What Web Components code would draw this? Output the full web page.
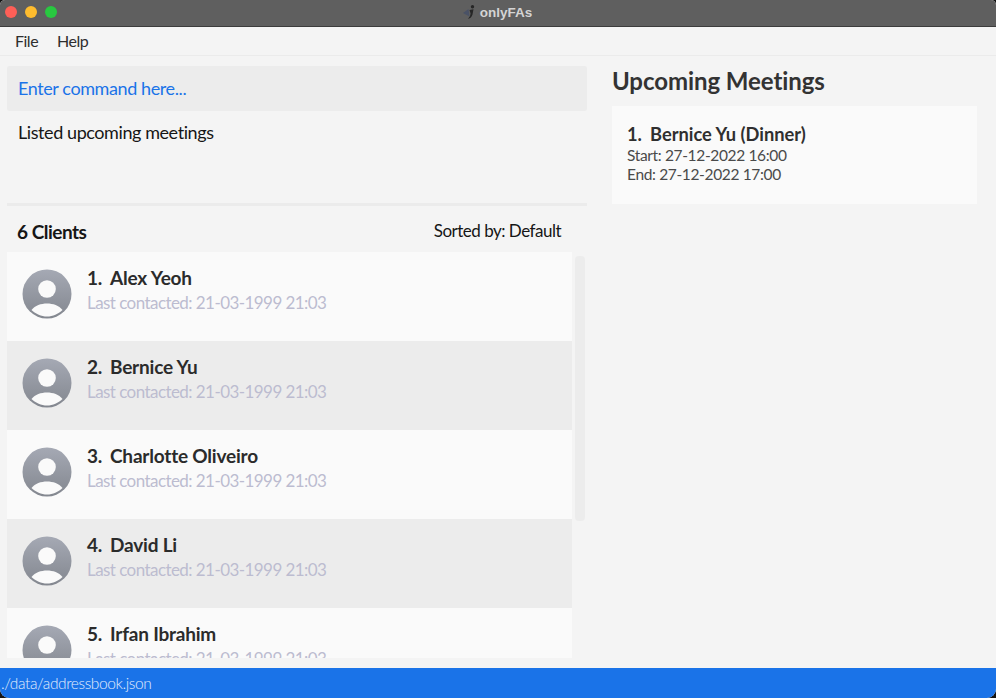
<!DOCTYPE html>
<html>
<head>
<meta charset="utf-8">
<title>onlyFAs</title>
<style>
  html, body { margin: 0; height: 100%; background: #141414; }
  body { font-family: Lato, "Open Sans", sans-serif; overflow: hidden; }
</style>
</head>
<body>
<app-window>
  <title-bar slot="top" title-text="onlyFAs"></title-bar>
  <menu-bar slot="top"></menu-bar>
  <command-box slot="left"></command-box>
  <result-display slot="left">Listed upcoming meetings</result-display>
  <client-list slot="left" count="6 Clients" sort="Sorted by: Default">
    <client-card index="1" name="Alex Yeoh" contacted="21-03-1999 21:03"></client-card>
    <client-card index="2" name="Bernice Yu" contacted="21-03-1999 21:03" alt></client-card>
    <client-card index="3" name="Charlotte Oliveiro" contacted="21-03-1999 21:03"></client-card>
    <client-card index="4" name="David Li" contacted="21-03-1999 21:03" alt></client-card>
    <client-card index="5" name="Irfan Ibrahim" contacted="21-03-1999 21:03"></client-card>
  </client-list>
  <meeting-panel slot="right" heading="Upcoming Meetings">
    <meeting-card index="1" name="Bernice Yu (Dinner)" start="27-12-2022 16:00" end="27-12-2022 17:00"></meeting-card>
  </meeting-panel>
  <status-bar slot="bottom">./data/addressbook.json</status-bar>
</app-window>

<script>
  // small helper so every element gets an open shadow root from a template
  function define (name, html, setup) {
    const template = document.createElement('template')
    template.innerHTML = html
    customElements.define(name, class extends HTMLElement {
      constructor () {
        super()
        this.attachShadow({ mode: 'open' })
          .appendChild(template.content.cloneNode(true))
      }

      connectedCallback () {
        if (setup) setup(this, this.shadowRoot)
      }
    })
  }

  define('app-window', `
    <style>
      :host {
        display: flex;
        flex-direction: column;
        width: 996px;
        height: 698px;
        background: #f4f4f4;
        border-radius: 5px 5px 9px 9px;
        overflow: hidden;
      }
      .main {
        flex: 1;
        min-height: 0;
        display: grid;
        grid-template-columns: 612px 1fr;
      }
      .left { display: flex; flex-direction: column; min-height: 0; padding: 10px 0 0 7px; width: 580px; }
      .right { min-width: 0; }
    </style>
    <slot name="top"></slot>
    <div class="main">
      <div class="left"><slot name="left"></slot></div>
      <div class="right"><slot name="right"></slot></div>
    </div>
    <slot name="bottom"></slot>
  `)

  define('title-bar', `
    <style>
      :host {
        display: flex;
        align-items: center;
        justify-content: center;
        position: relative;
        height: 26px;
        background: #5f5f5f;
        border-bottom: 1px solid #3c3c3c;
        color: #d4d4d4;
        font: 700 13.5px "Liberation Sans", sans-serif;
      }
      .lights { position: absolute; left: 5px; top: 6px; display: flex; gap: 8px; }
      .lights i { width: 12px; height: 12px; border-radius: 50%; display: block; }
      .name { display: flex; align-items: center; gap: 5px; margin: -2px 0 0 -1px; }
      svg { display: block; }
    </style>
    <div class="lights">
      <i style="background:#fd5f57"></i>
      <i style="background:#febc2e"></i>
      <i style="background:#28c840"></i>
    </div>
    <div class="name">
      <svg width="12" height="16" viewBox="0 0 12 16">
        <path d="M0 9 L5.5 5 L6.5 12.5 Z" fill="#4a5266"/>
        <circle cx="9.5" cy="2.8" r="1.7" fill="#262626"/>
        <path d="M6.5 6 L10.5 5.2 L9.5 10.5 Q8.5 14 5 15 Q7.6 12.5 7.6 9.5 Z" fill="#262626"/>
      </svg>
      <span id="t"></span>
    </div>
  `, (el, root) => {
    root.getElementById('t').textContent = el.getAttribute('title-text')
  })

  define('menu-bar', `
    <style>
      :host {
        display: flex;
        height: 27px;
        align-items: center;
        gap: 19px;
        padding: 0 15px 1px;
        background: #f4f4f4;
        border-bottom: 1px solid #ebebeb;
        color: #2e2e2e;
        font-size: 16px;
        letter-spacing: -0.5px;
      }
    </style>
    <span>File</span><span>Help</span>
  `)

  define('command-box', `
    <style>
      :host {
        display: flex;
        align-items: center;
        flex: none;
        box-sizing: border-box;
        height: 45px;
        padding: 0 11px 2px;
        background: #ececec;
        border-radius: 2px;
        color: #1a73e8;
        font-size: 18px;
        letter-spacing: -0.4px;
      }
    </style>
    <span>Enter command here...</span>
  `)

  define('result-display', `
    <style>
      :host {
        display: block;
        flex: none;
        box-sizing: border-box;
        height: 95px;
        padding: 10px 11px 0;
        color: #161616;
        font-size: 18px;
        line-height: 22px;
        letter-spacing: -0.42px;
        border-bottom: 3px solid #ebebeb;
      }
    </style>
    <slot></slot>
  `)

  define('client-list', `
    <style>
      :host { display: flex; flex-direction: column; flex: 1; min-height: 0; }
      header {
        display: flex;
        justify-content: space-between;
        align-items: center;
        flex: none;
        height: 46px;
        padding: 0 26px 0 10px;
        color: #161616;
      }
      .count { font-size: 19px; font-weight: 700; letter-spacing: -0.5px; margin-top: 4px; }
      .sort { font-size: 17px; letter-spacing: -0.5px; margin-top: 2px; }
      .body { display: flex; gap: 3px; height: 406px; margin-bottom: 10px; overflow: hidden; flex: none; }
      .items { width: 565px; flex: none; overflow: hidden; }
      .track { flex: none; width: 10px; height: 265px; margin-top: 4px; background: #ececec; border-radius: 4px; }
    </style>
    <header><span class="count" id="c"></span><span class="sort" id="s"></span></header>
    <div class="body">
      <div class="items"><slot></slot></div>
      <div class="track"></div>
    </div>
  `, (el, root) => {
    root.getElementById('c').textContent = el.getAttribute('count')
    root.getElementById('s').textContent = el.getAttribute('sort')
  })

  define('client-card', `
    <style>
      :host {
        display: flex;
        gap: 15px;
        box-sizing: border-box;
        height: 89px;
        padding: 17px 15px 0;
        background: #fafafa;
      }
      :host([alt]) { background: #ececec; }
      svg { flex: none; display: block; }
      .name { display: flex; color: #2b2b2b; font-size: 19px; font-weight: 700; line-height: 17px; white-space: pre; letter-spacing: -0.2px; }
      .num { width: 23px; flex: none; }
      .sub { color: #bcbcd0; font-size: 17px; line-height: 22px; margin-top: 6px; white-space: nowrap; letter-spacing: -0.56px; }
    </style>
    <svg width="50" height="50" viewBox="0 0 50 50">
      <defs>
        <linearGradient id="g" x1="0" y1="0" x2="0" y2="1">
          <stop offset="0" stop-color="#a5a9b4"/>
          <stop offset="1" stop-color="#83878f"/>
        </linearGradient>
      </defs>
      <circle cx="25" cy="25" r="24.5" fill="url(#g)"/>
      <circle cx="25" cy="20" r="8.8" fill="#fafafa"/>
      <path d="M9.5 41 C13 36.5 19 34.5 25 34.5 C31 34.5 37 36.5 40.5 41 C36 45 31 47.5 25 47.5 C19 47.5 14 45 9.5 41 Z" fill="#fafafa"/>
    </svg>
    <div class="info">
      <div class="name"><span class="num" id="i"></span><span id="n"></span></div>
      <div class="sub" id="s"></div>
    </div>
  `, (el, root) => {
    root.getElementById('i').textContent = el.getAttribute('index') + '.'
    root.getElementById('n').textContent = el.getAttribute('name')
    root.getElementById('s').textContent = 'Last contacted: ' + el.getAttribute('contacted')
  })

  define('meeting-panel', `
    <style>
      :host { display: block; width: 365px; }
      h2 {
        margin: 0;
        height: 50px;
        padding-top: 10px;
        box-sizing: border-box;
        color: #333;
        font-size: 24px;
        line-height: 30px;
        font-weight: 700;
        letter-spacing: -0.07px;
      }
    </style>
    <h2 id="h"></h2>
    <slot></slot>
  `, (el, root) => {
    root.getElementById('h').textContent = el.getAttribute('heading')
  })

  define('meeting-card', `
    <style>
      :host {
        display: block;
        box-sizing: border-box;
        height: 98px;
        padding: 18px 15px 0;
        background: #fafafa;
      }
      .t { display: flex; color: #2f2f2f; font-size: 18.3px; font-weight: 700; line-height: 20px; }
      .num { width: 23px; flex: none; }
      .l { font-size: 15.5px; line-height: 19px; color: #4a4a4a; letter-spacing: -0.35px; }
      .t + .l { margin-top: 2px; }
    </style>
    <div class="t"><span class="num" id="i"></span><span id="t"></span></div>
    <div class="l" id="s"></div>
    <div class="l" id="e"></div>
  `, (el, root) => {
    root.getElementById('i').textContent = el.getAttribute('index') + '.'
    root.getElementById('t').textContent = el.getAttribute('name')
    root.getElementById('s').textContent = 'Start: ' + el.getAttribute('start')
    root.getElementById('e').textContent = 'End: ' + el.getAttribute('end')
  })

  define('status-bar', `
    <style>
      :host {
        display: flex;
        align-items: center;
        flex: none;
        box-sizing: border-box;
        height: 30px;
        padding: 0 1px;
        background: #1a73e8;
        color: #e2edfc;
        font-size: 15.5px;
        font-weight: 300;
        letter-spacing: -0.4px;
      }
    </style>
    <slot></slot>
  `)
</script>
</body>
</html>
